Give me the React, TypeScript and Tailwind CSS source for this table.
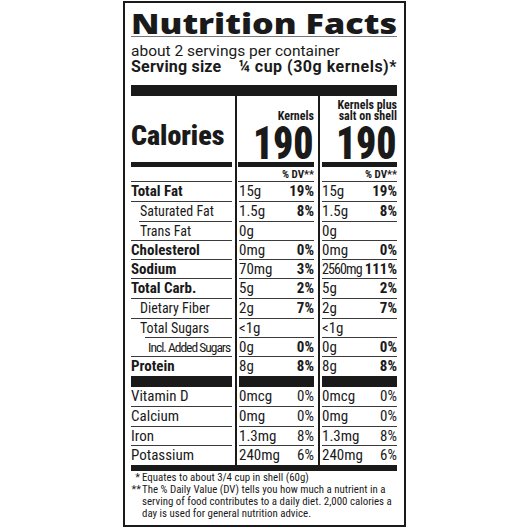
import React from 'react';

const cond = "font-['Roboto_Condensed',sans-serif]";
const LINE = 'h-px bg-[#3a3a3a]';
const BAR = 'h-[11px] bg-[#1a1a1a]';

type Row = {
  label: string;
  lc: string; // label classes
  h: string; // cell height + leading
  ll: string; // line under label
  vl: string; // line under values
  a: string;
  ap?: string;
  b: string;
  bp?: string;
  pc?: string; // % classes
  bc?: string; // extra classes for second value
};

const B = 'font-bold text-[15px]';
const SUB = 'text-[14px] pl-[9px]';
const H19 = 'h-[19px] leading-[19px]';
const H18 = 'h-[18px] leading-[18px]';
const PB = 'font-bold';

const rows: Row[] = [
  { label: 'Total Fat', lc: B, h: H19, ll: LINE, vl: LINE, a: '15g', ap: '19%', b: '15g', bp: '19%', pc: PB },
  { label: 'Saturated Fat', lc: SUB, h: H19, ll: 'h-px bg-[#3a3a3a] ml-[8px]', vl: LINE, a: '1.5g', ap: '8%', b: '1.5g', bp: '8%', pc: PB },
  { label: 'Trans Fat', lc: SUB, h: H18, ll: LINE, vl: LINE, a: '0g', b: '0g' },
  { label: 'Cholesterol', lc: B, h: H18, ll: LINE, vl: LINE, a: '0mg', ap: '0%', b: '0mg', bp: '0%', pc: PB },
  { label: 'Sodium', lc: B, h: H18, ll: LINE, vl: LINE, a: '70mg', ap: '3%', b: '2560mg', bp: '111%', pc: PB, bc: 'text-[14px] tracking-[-0.9px]' },
  { label: 'Total Carb.', lc: B, h: H19, ll: LINE, vl: LINE, a: '5g', ap: '2%', b: '5g', bp: '2%', pc: PB },
  { label: 'Dietary Fiber', lc: SUB, h: H19, ll: LINE, vl: LINE, a: '2g', ap: '7%', b: '2g', bp: '7%', pc: PB },
  { label: 'Total Sugars', lc: SUB, h: H18, ll: 'h-px bg-[#3a3a3a] ml-[14px]', vl: LINE, a: '<1g', b: '<1g' },
  { label: 'Incl. Added Sugars', lc: 'text-[13.5px] pl-[17px] tracking-[-1px] whitespace-nowrap', h: H18, ll: LINE, vl: LINE, a: '0g', ap: '0%', b: '0g', bp: '0%', pc: PB },
  { label: 'Protein', lc: B, h: H19, ll: BAR, vl: BAR, a: '8g', ap: '8%', b: '8g', bp: '8%', pc: PB },
  { label: 'Vitamin D', lc: 'text-[15px]', h: H19, ll: LINE, vl: LINE, a: '0mcg', ap: '0%', b: '0mcg', bp: '0%' },
  { label: 'Calcium', lc: 'text-[15px]', h: H19, ll: LINE, vl: LINE, a: '0mg', ap: '0%', b: '0mg', bp: '0%' },
  { label: 'Iron', lc: 'text-[15px]', h: H18, ll: LINE, vl: LINE, a: '1.3mg', ap: '8%', b: '1.3mg', bp: '8%' },
  { label: 'Potassium', lc: 'text-[15px]', h: H19, ll: '', vl: '', a: '240mg', ap: '6%', b: '240mg', bp: '6%' },
];

const Values = ({ v, p, h, pc, vc, line }: any) => (
  <div>
    <div className={`${h} flex justify-between text-[15px] whitespace-nowrap`}>
      <span className={vc}>{v}</span>
      <span className={pc}>{p}</span>
    </div>
    {line && <div className={line} />}
  </div>
);

export default function App() {
  return (
    <div className={`w-[530px] h-[530px] bg-white pt-[1px] pl-[123px] text-[#1a1a1a] ${cond}`}>
      <div className="w-[283px] h-[526px] border-2 border-[#1a1a1a] pl-[6px] pr-[7px] pt-[4px]">
        <div className="h-[30px] leading-[32px] border-b border-[#777] whitespace-nowrap">
          <span className="inline-block origin-left scale-x-[1.22] font-['Noto_Sans',sans-serif] font-black text-[28px]">
            Nutrition Facts
          </span>
        </div>
        <div className="mt-[6px] font-['Roboto',sans-serif] text-[15.5px] leading-[16px]">about 2 servings per container</div>
        <div className="flex justify-between font-['Roboto',sans-serif] font-bold text-[16px] leading-[16px]">
          <span className="tracking-[0.2px]">Serving size</span>
          <span className="tracking-[0.5px]">¼ cup (30g kernels)*</span>
        </div>
        <div className="mt-[10px] h-[11px] bg-[#1a1a1a]" />

        {/* calories header */}
        <div className="grid grid-cols-[104px_83px_79px]">
          <div className="pr-[3px]">
            <div className="h-[66px] flex items-end pb-[12px]">
              <span className="font-black text-[28px] leading-[28px]">Calories</span>
            </div>
            <div className="h-[5px] bg-[#1a1a1a]" />
          </div>
          <div className="border-l-2 border-[#1a1a1a] pl-px pr-[4px]">
            <div className="h-[66px] flex flex-col justify-end items-end">
              <span className="mb-[2px] font-bold text-[12px] leading-[11px]">Kernels</span>
              <span className="inline-block origin-right scale-x-[0.86] font-black text-[46px] leading-[38px]">190</span>
            </div>
            <div className="h-[5px] bg-[#1a1a1a]" />
          </div>
          <div className="border-l-2 border-[#1a1a1a] pl-[2px]">
            <div className="h-[66px] flex flex-col justify-end items-end">
              <span className="mb-[2px] font-bold text-[12px] leading-[11px] text-right">
                Kernels plus
                <br />
                salt on shell
              </span>
              <span className="inline-block origin-right scale-x-[0.86] font-black text-[46px] leading-[38px]">190</span>
            </div>
            <div className="h-[5px] bg-[#1a1a1a]" />
          </div>

          {/* % DV row */}
          <div className="pr-[3px]">
            <div className="h-[14px]" />
            <div className={LINE} />
          </div>
          <div className="border-l-2 border-[#1a1a1a] pl-px pr-[4px]">
            <div className="h-[14px] text-right font-bold text-[11px] leading-[15px]">% DV**</div>
            <div className={LINE} />
          </div>
          <div className="border-l-2 border-[#1a1a1a] pl-[2px]">
            <div className="h-[14px] text-right font-bold text-[11px] leading-[15px]">% DV**</div>
            <div className={LINE} />
          </div>

          {rows.map((r) => (
            <React.Fragment key={r.label}>
              <div className="pr-[3px]">
                <div className={`${r.h} ${r.lc} whitespace-nowrap`}>{r.label}</div>
                {r.ll && <div className={r.ll} />}
              </div>
              <div className="border-l-2 border-[#1a1a1a] pl-[2px] pr-[4px]">
                <Values v={r.a} p={r.ap} h={r.h} pc={r.pc} line={r.vl} />
              </div>
              <div className="border-l-2 border-[#1a1a1a] pl-[2px]">
                <Values v={r.b} p={r.bp} h={r.h} pc={r.pc} vc={r.bc} line={r.vl} />
              </div>
            </React.Fragment>
          ))}
        </div>
        <div className="h-[6px] bg-[#1a1a1a]" />

        <div className="mt-px text-[10.9px] leading-[12px]">
          <div className="flex">
            <span className="w-[10px] text-right pr-px">*</span>
            <span className="pl-px">Equates to about 3/4 cup in shell (60g)</span>
          </div>
          <div className="flex">
            <span className="w-[10px] text-right">**</span>
            <span className="pl-px">
              The % Daily Value (DV) tells you how much a nutrient in a
              <br />
              serving of food contributes to a daily diet. 2,000 calories a
              <br />
              day is used for general nutrition advice.
            </span>
          </div>
        </div>
      </div>
    </div>
  );
}
